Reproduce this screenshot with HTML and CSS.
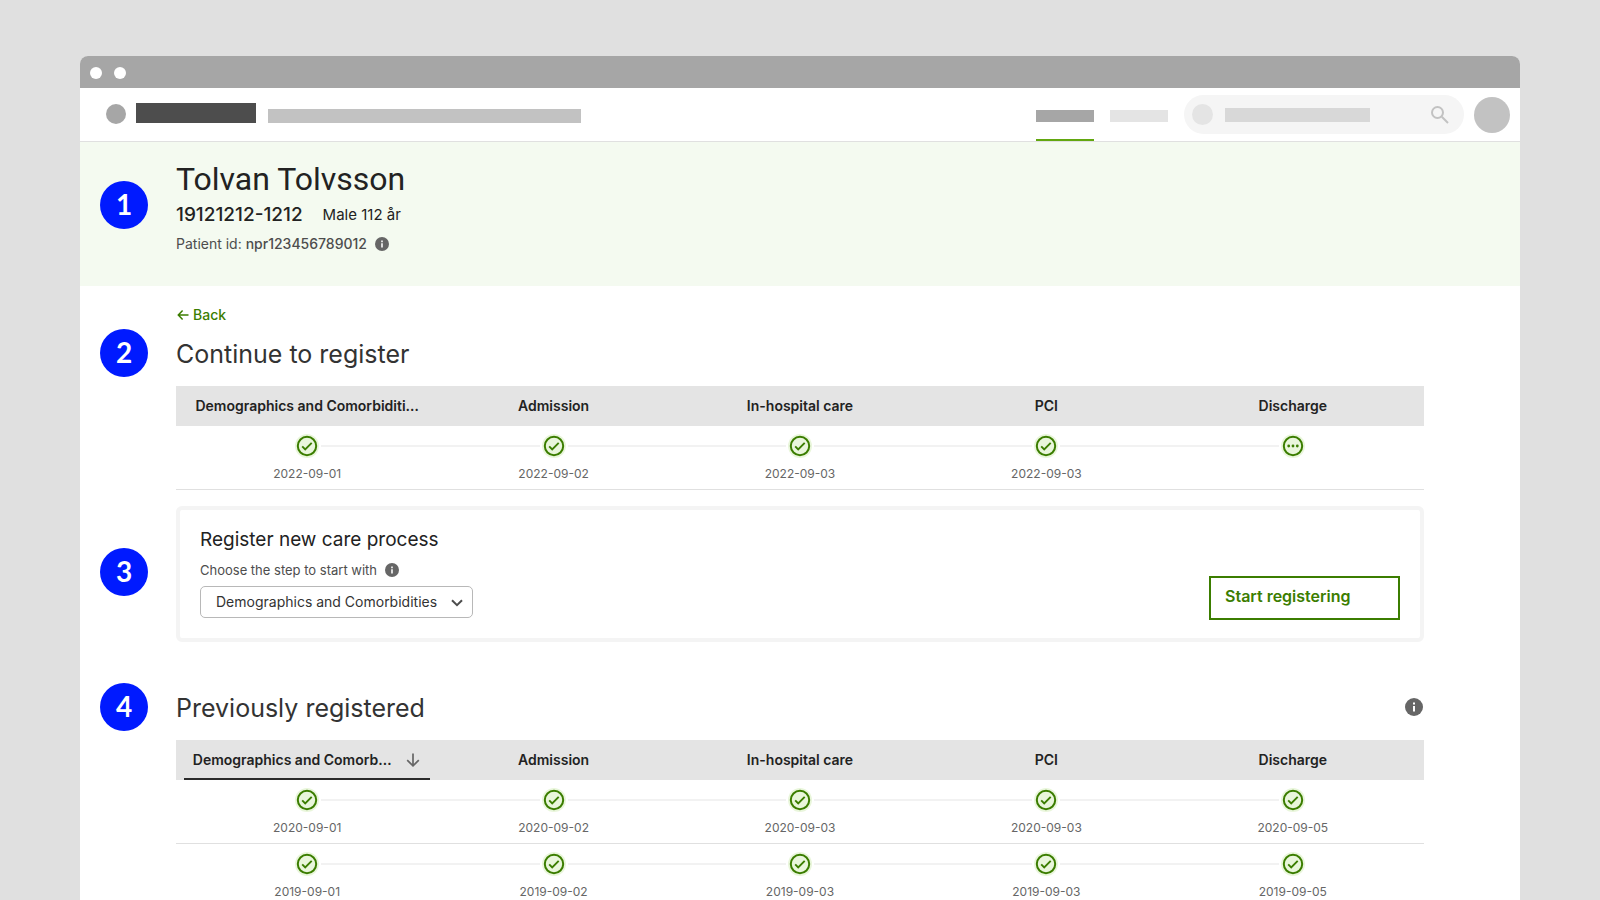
FILE: index.html
```html
<!DOCTYPE html>
<html lang="en">
<head>
<meta charset="utf-8">
<title>Tolvan Tolvsson – care process</title>
<link rel="stylesheet" href="styles.css">
</head>
<body>
<svg class="sprite" aria-hidden="true">
  <symbol id="check" viewBox="0 0 24 24">
    <circle cx="12" cy="12" r="12" fill="#e9f6db"/>
    <circle cx="12" cy="12" r="9.2" fill="none" stroke="#3b7d00" stroke-width="2"/>
    <path d="M7.2 12.4l3 3 6.5-6.6" fill="none" stroke="#3b7d00" stroke-width="1.9"/>
  </symbol>
  <symbol id="pending" viewBox="0 0 24 24">
    <circle cx="12" cy="12" r="12" fill="#e9f6db"/>
    <circle cx="12" cy="12" r="9.2" fill="none" stroke="#3b7d00" stroke-width="2"/>
    <circle cx="7.7" cy="12" r="1.4" fill="#3b7d00"/>
    <circle cx="12" cy="12" r="1.4" fill="#3b7d00"/>
    <circle cx="16.3" cy="12" r="1.4" fill="#3b7d00"/>
  </symbol>
  <symbol id="info" viewBox="0 0 18 18">
    <circle cx="9" cy="9" r="9" fill="#666"/>
    <path d="M8 4.6h2v2H8zM8 8h2v5.4H8z" fill="#fff"/>
  </symbol>
</svg>
<div class="window">
  <div class="titlebar"><span class="dot"></span><span class="dot"></span></div>
  <header class="topbar">
    <div class="brand-row">
      <span class="logo"></span>
      <span class="brand"></span>
      <span class="tagline"></span>
    </div>
    <nav class="tabs">
      <a class="tab tab-active" href="#" aria-label="Patient"><span class="tab-bar"></span></a>
      <a class="tab" href="#" aria-label="Reports"><span class="tab-bar"></span></a>
    </nav>
    <div class="search">
      <span class="search-chip"></span>
      <span class="search-bar"></span>
      <svg class="search-icon" viewBox="0 0 18 18" aria-hidden="true"><circle cx="6.5" cy="6.5" r="5.5"/><path d="M10.8 10.8l6.2 6.2"/></svg>
    </div>
    <span class="avatar"></span>
  </header>

  <section class="patient">
    <span class="badge badge-patient">1</span>
    <div>
      <h1 class="name">Tolvan Tolvsson</h1>
      <div class="identity"><strong class="pnr">19121212-1212</strong><span class="sex">Male 112 år</span></div>
      <div class="patient-id"><span>Patient id: <strong>npr123456789012</strong></span><svg class="info" role="img" aria-label="Info"><use href="#info"/></svg></div>
    </div>
  </section>

  <main class="content">
    <a class="back" href="#"><svg class="back-icon" viewBox="0 0 12 12" aria-hidden="true"><path d="M11.5 6H1.5M5.6 1.6L1.3 6l4.3 4.4"/></svg>Back</a>

    <span class="badge">2</span>
    <h2 class="heading">Continue to register</h2>
    <table class="steps">
      <thead><tr><th title="Demographics and Comorbidities">Demographics and Comorbiditi…</th><th>Admission</th><th>In-hospital care</th><th>PCI</th><th>Discharge</th></tr></thead>
      <tbody>
        <tr>
          <td><svg class="mark"><use href="#check"/></svg><time>2022-09-01</time></td>
          <td><svg class="mark"><use href="#check"/></svg><time>2022-09-02</time></td>
          <td><svg class="mark"><use href="#check"/></svg><time>2022-09-03</time></td>
          <td><svg class="mark"><use href="#check"/></svg><time>2022-09-03</time></td>
          <td><svg class="mark"><use href="#pending"/></svg></td>
        </tr>
      </tbody>
    </table>

    <span class="badge badge-card">3</span>
    <form class="card">
      <div class="field">
        <h3 class="card-title">Register new care process</h3>
        <div class="field-label"><label for="step">Choose the step to start with</label><svg class="info" role="img" aria-label="Info"><use href="#info"/></svg></div>
        <div class="select">
          <select id="step"><option>Demographics and Comorbidities</option><option>Admission</option><option>In-hospital care</option><option>PCI</option><option>Discharge</option></select>
          <svg class="chevron" viewBox="0 0 12 8" aria-hidden="true"><path d="M1 1.2l5 5 5-5"/></svg>
        </div>
      </div>
      <button class="start" type="button">Start registering</button>
    </form>

    <span class="badge badge-last">4</span>
    <div class="heading-row">
      <h2 class="heading">Previously registered</h2>
      <svg class="info info-large" role="img" aria-label="Info"><use href="#info"/></svg>
    </div>
    <table class="steps">
      <thead><tr><th class="sorted" aria-sort="descending" title="Demographics and Comorbidities">Demographics and Comorb…<svg class="sort-icon" viewBox="0 0 14 14" aria-hidden="true"><path d="M7 .5v12M1.2 7.2L7 12.8l5.8-5.6"/></svg></th><th>Admission</th><th>In-hospital care</th><th>PCI</th><th>Discharge</th></tr></thead>
      <tbody>
        <tr>
          <td><svg class="mark"><use href="#check"/></svg><time>2020-09-01</time></td>
          <td><svg class="mark"><use href="#check"/></svg><time>2020-09-02</time></td>
          <td><svg class="mark"><use href="#check"/></svg><time>2020-09-03</time></td>
          <td><svg class="mark"><use href="#check"/></svg><time>2020-09-03</time></td>
          <td><svg class="mark"><use href="#check"/></svg><time>2020-09-05</time></td>
        </tr>
        <tr>
          <td><svg class="mark"><use href="#check"/></svg><time>2019-09-01</time></td>
          <td><svg class="mark"><use href="#check"/></svg><time>2019-09-02</time></td>
          <td><svg class="mark"><use href="#check"/></svg><time>2019-09-03</time></td>
          <td><svg class="mark"><use href="#check"/></svg><time>2019-09-03</time></td>
          <td><svg class="mark"><use href="#check"/></svg><time>2019-09-05</time></td>
        </tr>
      </tbody>
    </table>
  </main>
</div>
</body>
</html>
```
FILE: styles.css
```css
* { box-sizing: border-box; }

body {
  margin: 0;
  padding: 56px 5% 0;
  background: #e0e0e0;
  color: #222;
  font-family: Inter, "Liberation Sans", sans-serif;
  font-size: 14px;
  line-height: 20px;
}

h1, h2, h3 { margin: 0; }
.sprite { display: none; }

.window {
  min-height: calc(100vh - 56px);
  background: #fff;
  border-radius: 8px 8px 0 0;
}

.titlebar {
  display: flex;
  align-items: center;
  gap: 12px;
  height: 32px;
  padding: 2px 10px 0;
  background: #a6a6a6;
  border-radius: 8px 8px 0 0;
}
.dot { width: 12px; height: 12px; border-radius: 50%; background: #fff; }

/* Top bar */
.topbar {
  display: flex;
  align-items: center;
  height: 54px;
  padding: 0 10px 0 26px;
  border-bottom: 1px solid #e0e0e0;
}
.brand-row { display: flex; flex: 1; align-items: center; padding-bottom: 2px; }
.logo { width: 20px; height: 20px; border-radius: 50%; background: #a6a6a6; }
.brand { width: 120px; height: 20px; margin: 0 12px 2px 10px; background: #4d4d4d; }
.tagline { flex: 0 1 313px; height: 14px; margin-top: 4px; background: #c2c2c2; }

.tabs { display: flex; gap: 16px; align-self: stretch; }
.tab {
  display: flex;
  align-items: center;
  width: 58px;
  padding-top: 4px;
  border-bottom: 2px solid transparent;
}
.tab-bar { flex: 1; height: 12px; background: #e4e4e4; }
.tab-active { border-color: #62a70f; }
.tab-active .tab-bar { background: #a6a6a6; }

.search {
  display: flex;
  align-items: center;
  width: 280px;
  height: 39px;
  margin: 0 10px 0 16px;
  padding: 0 15px 0 8px;
  border-radius: 20px;
  background: #f5f5f5;
}
.search-chip { width: 21px; height: 21px; border-radius: 50%; background: #e4e4e4; }
.search-bar { width: 145px; height: 14px; margin-left: 12px; background: #d8d8d8; }
.search-icon {
  width: 18px;
  height: 18px;
  margin-left: auto;
  fill: none;
  stroke: #c2c2c2;
  stroke-width: 2;
}
.avatar { width: 36px; height: 36px; border-radius: 50%; background: #c2c2c2; }

/* Section grid: number column and content column */
.patient, .content {
  display: grid;
  grid-template-columns: 48px minmax(0, 1fr);
  column-gap: 28px;
  align-items: center;
}
.badge {
  grid-column: 1;
  width: 48px;
  height: 48px;
  border-radius: 50%;
  background: #001aff;
  color: #fff;
  font: bold 28px/46px Lato, sans-serif;
  text-align: center;
}
.badge-patient { margin-bottom: 4px; }

.patient { padding: 17px 96px 32px 20px; background: #f4faf0; }
.name { font: 400 32px/40px Roboto, Inter, sans-serif; }
.identity { display: flex; align-items: center; gap: 20px; height: 31px; }
.pnr { font-size: 19px; font-weight: 500; }
.sex { font-size: 15px; }
.patient-id { display: flex; align-items: center; gap: 8px; margin-top: 4px; color: #4d4d4d; }
.patient-id strong { font-weight: 500; }
.info { width: 14px; height: 14px; }
.info-large { width: 18px; height: 18px; }

.content { padding: 19px 96px 0 20px; }
.back, .heading, .heading-row, .steps, .card { grid-column: 2; }
.back {
  display: flex;
  align-items: center;
  gap: 4px;
  justify-self: start;
  margin-bottom: 4px;
  padding-left: 1px;
  color: #3b7d00;
  font-weight: 500;
  text-decoration: none;
}
.back-icon { width: 12px; height: 12px; fill: none; stroke: currentColor; stroke-width: 1.5; }
.heading { padding-top: 2px; color: #333; font-size: 25px; line-height: 32px; font-weight: 400; }
.heading-row {
  display: flex;
  align-items: center;
  justify-content: space-between;
  margin-top: 41px;
  padding-right: 1px;
}
.badge-last { margin-top: 41px; }

/* Step tables */
.steps { display: block; margin-top: 9px; }
.steps thead, .steps tbody { display: block; }
.steps tr {
  display: grid;
  grid-template-columns: repeat(5, minmax(0, 1fr));
  padding: 0 8px;
}
.steps thead tr { background: #e4e4e4; }
.steps tbody tr { height: 64px; border-bottom: 1px solid #e0e0e0; }
.steps th {
  display: flex;
  align-items: center;
  justify-content: center;
  height: 40px;
  padding: 0 8px;
  font-weight: 600;
  white-space: nowrap;
}
.steps .sorted { border-bottom: 2px solid #2b2b2b; padding-top: 2px; }
.sort-icon {
  flex: none;
  width: 14px;
  height: 14px;
  margin: 0 2px 0 14px;
  fill: none;
  stroke: #666;
  stroke-width: 1.7;
}
.steps td {
  display: grid;
  grid-template-columns: 1fr 24px 1fr;
  column-gap: 2px;
  align-content: start;
  align-items: center;
  padding: 8px 0 0;
}
.steps td::before, .steps td::after { content: ""; grid-row: 1; height: 2px; background: #f2f2f2; }
.steps td::before { grid-column: 1; }
.steps td::after { grid-column: 3; }
.steps td:first-child::before, .steps td:last-child::after { background: none; }
.mark { grid-column: 2; grid-row: 1; width: 24px; height: 24px; }
.steps time {
  grid-column: 1 / -1;
  margin-top: 6px;
  color: #666;
  font-size: 12px;
  text-align: center;
}

/* New care process */
.badge-card { margin-top: 12px; }
.card {
  display: flex;
  align-items: flex-end;
  justify-content: space-between;
  margin-top: 16px;
  padding: 16px 20px 18px;
  border: 4px solid #f4f4f4;
  border-radius: 6px;
}
.field { padding-bottom: 2px; }
.card-title { font-size: 19px; line-height: 28px; font-weight: 400; }
.field-label {
  display: flex;
  align-items: center;
  gap: 8px;
  margin: 6px 0;
  color: #4d4d4d;
  font-size: 13px;
}
.select { position: relative; width: 273px; }
.select select {
  appearance: none;
  display: block;
  width: 100%;
  height: 32px;
  padding: 0 30px 0 15px;
  border: 1px solid #b8b8b8;
  border-radius: 5px;
  background: #fff;
  color: #333;
  font: inherit;
}
.chevron {
  position: absolute;
  top: 13px;
  right: 10px;
  width: 12px;
  height: 8px;
  fill: none;
  stroke: #4d4d4d;
  stroke-width: 2;
  pointer-events: none;
}
.start {
  min-width: 191px;
  padding: 6px 14px 10px;
  border: 2px solid #3b7d00;
  background: #fff;
  color: #3b7d00;
  font: 600 16px/24px Inter, "Liberation Sans", sans-serif;
  text-align: left;
}
```
